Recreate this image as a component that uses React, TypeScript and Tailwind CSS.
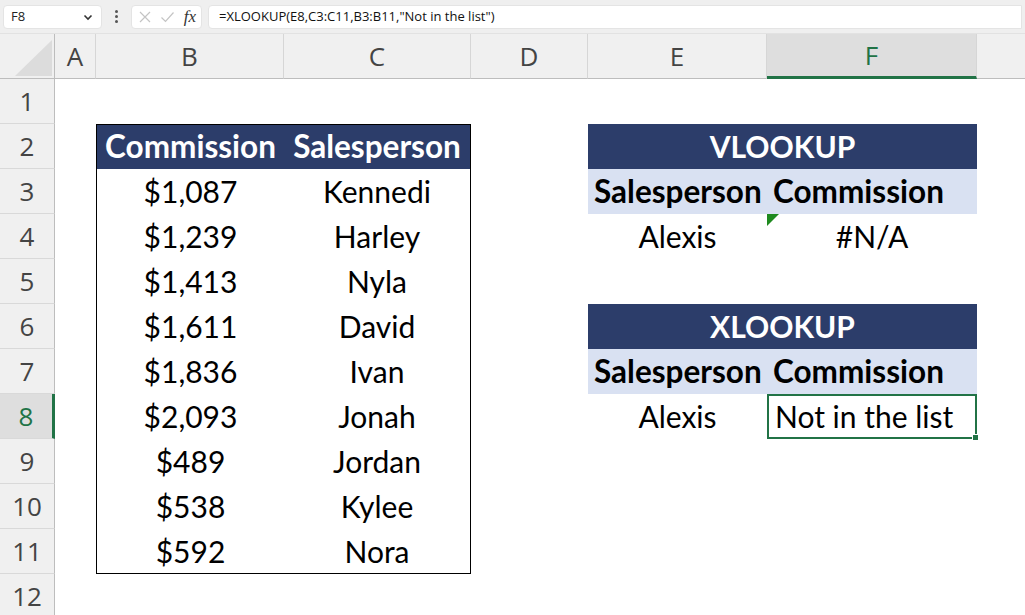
import React from 'react';

const NAVY = 'bg-[#2c3d6a] text-white font-bold text-[31.5px]';
const LIGHT = 'bg-[#d9e1f2] text-black font-bold text-[31.5px] justify-start pl-[6px]';
const TITLE = 'bg-[#2c3d6a] text-white font-bold text-[29px]';

type CellDef = {
  text?: string;
  cls?: string;
  span?: number;
  extra?: React.ReactNode;
};

const amounts = ['$1,087', '$1,239', '$1,413', '$1,611', '$1,836', '$2,093', '$489', '$538', '$592'];
const names = ['Kennedi', 'Harley', 'Nyla', 'David', 'Ivan', 'Jonah', 'Jordan', 'Kylee', 'Nora'];

// one entry per sheet row: cells for columns A..G (merged cells use span)
const buildRow = (r: number): CellDef[] => {
  const a: CellDef = {};
  const d: CellDef = {};
  const g: CellDef = {};
  let b: CellDef = {};
  let c: CellDef = {};
  let right: CellDef[] = [{}, {}];

  if (r === 2) {
    b = { text: 'Commission', cls: `${NAVY} border-l border-t border-black` };
    c = { text: 'Salesperson', cls: `${NAVY} border-r border-t border-black` };
  } else if (r >= 3 && r <= 11) {
    const last = r === 11 ? ' border-b' : '';
    b = { text: amounts[r - 3], cls: `border-l border-black${last}` };
    c = { text: names[r - 3], cls: `border-r border-black${last}` };
  }

  if (r === 2) right = [{ text: 'VLOOKUP', cls: TITLE, span: 2 }];
  if (r === 6) right = [{ text: 'XLOOKUP', cls: TITLE, span: 2 }];
  if (r === 3 || r === 7) {
    right = [
      { text: 'Salesperson', cls: LIGHT },
      { text: 'Commission', cls: LIGHT },
    ];
  }
  if (r === 4) {
    right = [
      { text: 'Alexis' },
      {
        text: '#N/A',
        extra: (
          <svg className="absolute left-0 top-0" width="12" height="12" viewBox="0 0 12 12">
            <polygon points="0,0 12,0 0,12" fill="#1f8a1f" />
          </svg>
        ),
      },
    ];
  }
  if (r === 8) {
    right = [
      { text: 'Alexis' },
      {
        text: 'Not in the list',
        cls: 'justify-start pl-[6px] border-2 border-[#217346]',
        extra: (
          <span className="absolute -right-[4px] -bottom-[4px] w-[7px] h-[7px] bg-[#217346] border border-white" />
        ),
      },
    ];
  }

  return [a, b, c, d, ...right, g];
};

const colLetters = ['A', 'B', 'C', 'D', 'E', 'F'];

export default function App() {
  return (
    <div className="w-[1025px] h-[615px] overflow-hidden bg-white font-['Lato',sans-serif]">
      {/* Formula bar */}
      <div className="h-[34px] bg-[#efefef] border-b border-[#e2e2e2] flex items-center gap-[6px] px-[3px] font-['Open_Sans',sans-serif]">
        <div className="w-[99px] h-[24px] bg-white rounded-[4px] border border-[#e4e4e4] flex items-center justify-between pl-[7px] pr-[8px] text-[13px] text-[#222]">
          <span>F8</span>
          <svg width="10" height="10" viewBox="0 0 10 10">
            <path d="M1.5 3.5 L5 7 L8.5 3.5" fill="none" stroke="#333" strokeWidth="1.6" />
          </svg>
        </div>
        <div className="w-[17px] flex flex-col items-center gap-[2px]">
          <span className="w-[3px] h-[3px] rounded-full bg-[#555]" />
          <span className="w-[3px] h-[3px] rounded-full bg-[#555]" />
          <span className="w-[3px] h-[3px] rounded-full bg-[#555]" />
        </div>
        <div className="w-[71px] h-[24px] bg-white rounded-[4px] border border-[#e4e4e4] flex items-center justify-between pl-[6px] pr-[5px]">
          <svg width="14" height="14" viewBox="0 0 14 14">
            <path d="M2 2 L12 12 M12 2 L2 12" stroke="#c4c4c4" strokeWidth="1.2" />
          </svg>
          <svg width="15" height="14" viewBox="0 0 15 14">
            <path d="M1.5 7.5 L5.5 11.5 L13.5 2.5" fill="none" stroke="#c4c4c4" strokeWidth="1.2" />
          </svg>
          <span className="font-['Liberation_Serif',serif] italic text-[17px] text-[#333] leading-none">fx</span>
        </div>
        <div className="flex-1 h-[24px] bg-white rounded-l-[4px] border border-[#e4e4e4] flex items-center pl-[10px] text-[13px] text-[#111]">
          =XLOOKUP(E8,C3:C11,B3:B11,"Not in the list")
        </div>
      </div>

      {/* Sheet */}
      <div className="grid grid-cols-[55px_41px_188px_187px_117px_179px_210px_1fr] auto-rows-[45px]">
        {/* column headers */}
        <div className="relative bg-[#f0f0f0] border-b border-r border-[#bdbdbd]">
          <svg className="absolute left-[15px] top-[6px]" width="37" height="36" viewBox="0 0 37 36">
            <polygon points="0,36 37,36 37,0" fill="#dcdcdc" />
          </svg>
        </div>
        {colLetters.map((l) => {
          const sel = l === 'F';
          return (
            <div
              key={l}
              className={`flex items-center justify-center text-[26px] font-['Open_Sans',sans-serif] border-r border-[#d6d6d6] ${
                sel
                  ? 'bg-[#dedede] text-[#217346] border-b-[3px] border-b-[#217346]'
                  : 'bg-[#f0f0f0] text-[#444] border-b border-b-[#bdbdbd]'
              }`}
            >
              {l}
            </div>
          );
        })}
        <div className="bg-[#f0f0f0] border-b border-[#bdbdbd]" />

        {Array.from({ length: 12 }, (_, i) => i + 1).map((r) => {
          const sel = r === 8;
          const cells = buildRow(r);
          return (
            <React.Fragment key={r}>
              <div
                className={`flex items-center justify-center text-[26px] font-['Open_Sans',sans-serif] border-b border-[#d9d9d9] ${
                  sel
                    ? 'bg-[#dedede] text-[#217346] border-r-[3px] border-r-[#217346]'
                    : 'bg-[#f0f0f0] text-[#444] border-r border-r-[#bdbdbd]'
                }`}
              >
                {r}
              </div>
              {cells.map((c, j) => (
                <div
                  key={j}
                  className={`relative flex items-center justify-center text-[30px] text-black whitespace-nowrap ${
                    c.span === 2 ? 'col-span-2' : ''
                  } ${c.cls ?? ''}`}
                >
                  {c.text}
                  {c.extra}
                </div>
              ))}
            </React.Fragment>
          );
        })}
      </div>
    </div>
  );
}
